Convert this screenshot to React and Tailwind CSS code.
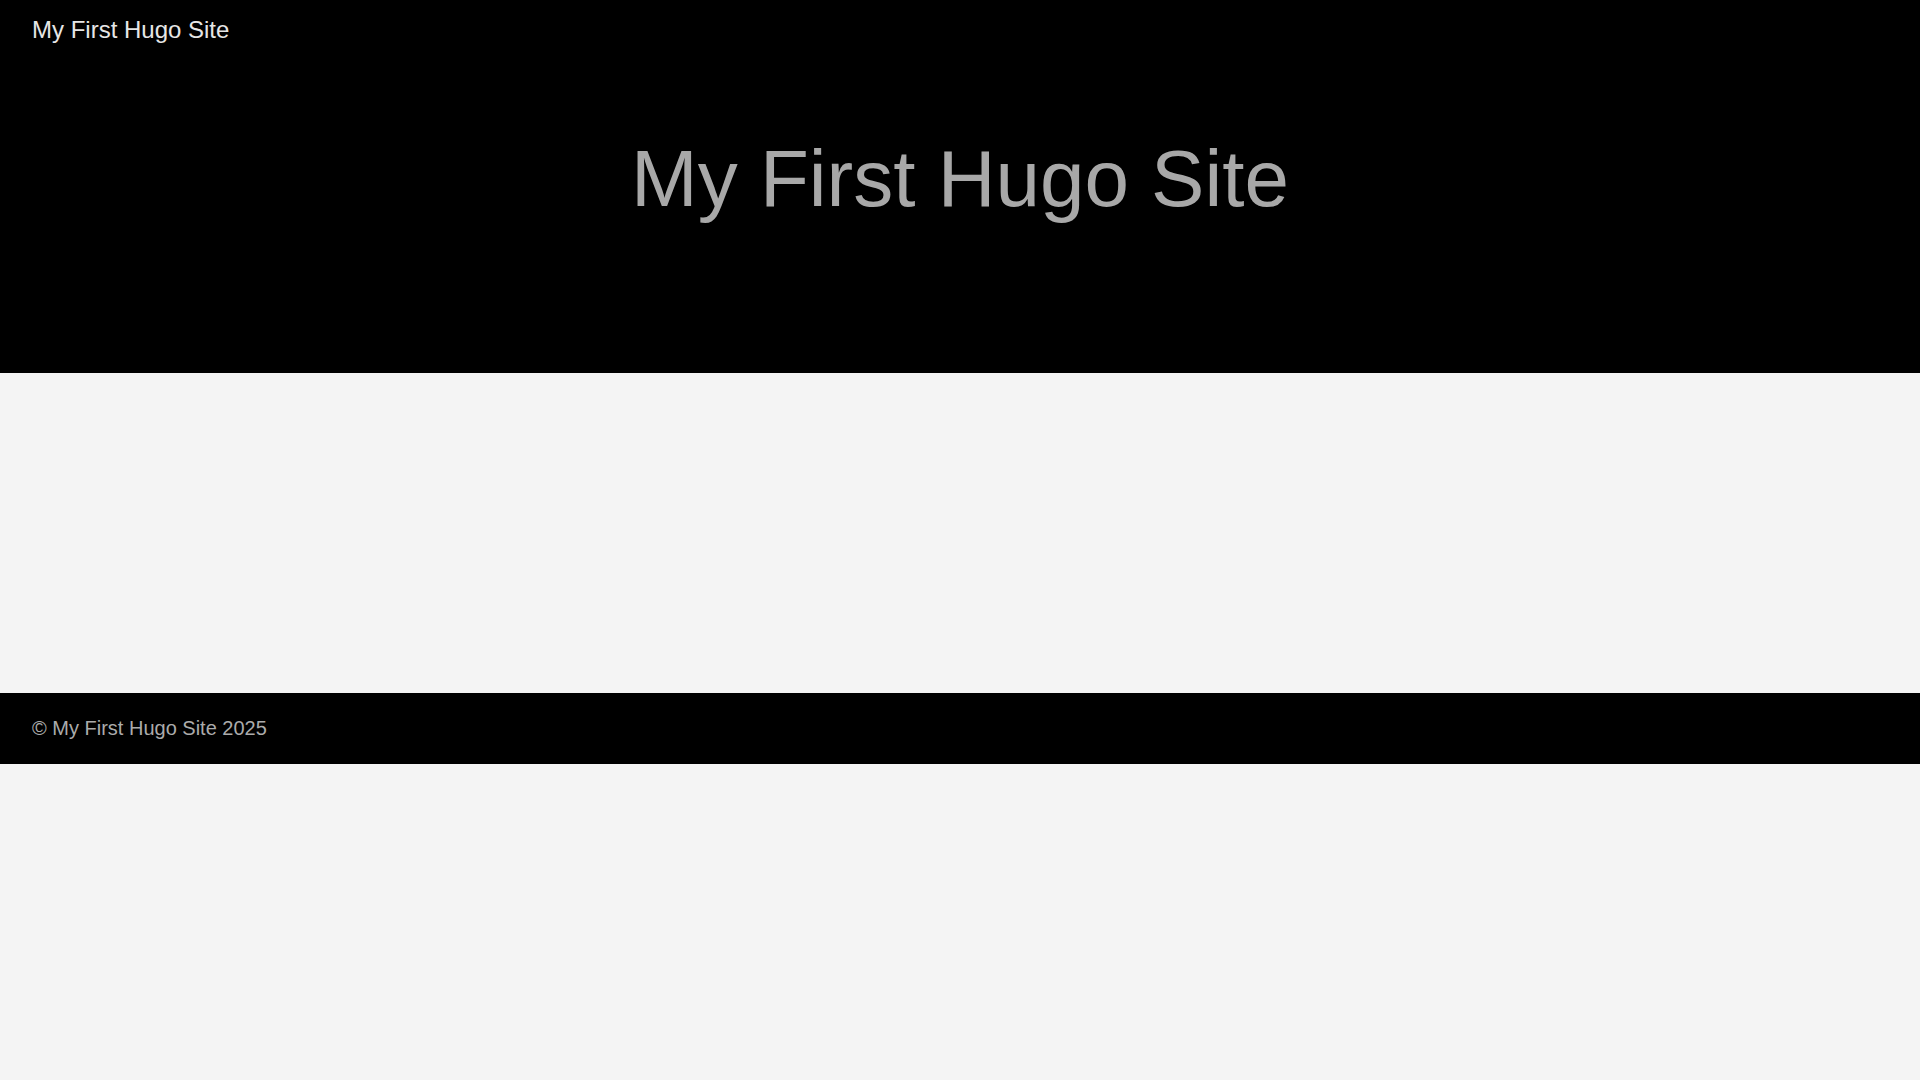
import React from "react";

export default function App() {
  return (
    <div
      className="min-h-screen bg-[#f4f4f4]"
      style={{ fontFamily: '"Liberation Sans", Arial, sans-serif' }}
    >
      {/* Header */}
      <header className="bg-black h-[373px]">
        <nav className="px-8 pt-4 pb-4">
          <a href="#" className="text-[24px] leading-[normal] text-[#e6e6e6]">
            My First Hugo Site
          </a>
        </nav>
        <div className="text-center pt-[72px]">
          <h1 className="text-[80px] leading-[normal] text-[#a8a8a8]">
            My First Hugo Site
          </h1>
        </div>
      </header>

      {/* Main */}
      <main className="h-[320px]"></main>

      {/* Footer */}
      <footer className="bg-black px-8 py-6">
        <p className="text-[20px] leading-[1.15] text-[#ababab]">
          © My First Hugo Site 2025
        </p>
      </footer>
    </div>
  );
}
